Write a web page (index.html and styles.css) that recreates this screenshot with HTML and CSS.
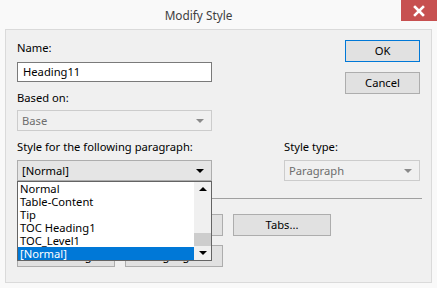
FILE: index.html
```html
<!DOCTYPE html>
<html lang="en">
<head>
    <meta charset="utf-8" />
    <title>Modify Style</title>
    <link rel="stylesheet" href="styles.css">
</head>
<body>
    <div class="window">
        <div class="titlebar">
            <div class="title">Modify Style</div>
            <div class="close">
                <svg width="12" height="12" viewBox="0 0 12 12">
                    <path d="M2 2 L10 10 M10 2 L2 10" stroke="#fff" stroke-width="2.6" stroke-linecap="square" />
                </svg>
            </div>
        </div>

        <div class="panel">
            <div class="top-row">
                <div class="left-col">
                    <div class="label">Name:</div>
                    <div class="textbox">Heading11</div>
                    <div class="label based">Based on:</div>
                    <div class="select disabled">
                        <span>Base</span>
                        <span class="arrow"></span>
                    </div>
                </div>
                <div class="right-col">
                    <div class="btn default">OK</div>
                    <div class="btn">Cancel</div>
                </div>
            </div>

            <div class="mid-row">
                <div class="left-col">
                    <div class="label">Style for the following paragraph:</div>
                    <div class="select-wrap">
                        <div class="select open">
                            <span>[Normal]</span>
                            <span class="arrow"></span>
                        </div>
                        <div class="droplist">
                            <div class="items">
                                <div class="item">Normal</div>
                                <div class="item">Table-Content</div>
                                <div class="item">Tip</div>
                                <div class="item">TOC Heading1</div>
                                <div class="item">TOC_Level1</div>
                                <div class="item selected">[Normal]</div>
                            </div>
                            <div class="scrollbar">
                                <div class="sb-up"></div>
                                <div class="sb-track">
                                    <div class="sb-thumb"></div>
                                </div>
                                <div class="sb-down"></div>
                            </div>
                        </div>
                    </div>
                </div>
                <div class="type-col">
                    <div class="label">Style type:</div>
                    <div class="select disabled">
                        <span>Paragraph</span>
                        <span class="arrow"></span>
                    </div>
                </div>
            </div>

            <div class="separator"></div>

            <!-- first row sits under the open list, so its captions are never seen -->
            <div class="button-grid">
                <div class="btn wide"></div>
                <div class="btn wide"></div>
                <div class="btn wide">Tabs...</div>
                <div class="btn wide">Numbering...</div>
                <div class="btn wide">Language...</div>
            </div>
        </div>
    </div>
</body>
</html>
```

FILE: styles.css
```css
html, body {
  margin: 0;
  padding: 0;
}

body {
  background-color: #f9f9f9;
  font-family: "Noto Sans", "Open Sans", sans-serif;
  font-size: 11.2px;
  color: #000;
}

.window {
  width: 437px;
  height: 288px;
  overflow: hidden;
}

.titlebar {
  display: flex;
  height: 29px;
}

.title {
  flex: 1;
  text-align: center;
  font-size: 11.8px;
  line-height: 30px;
  color: #404040;
  padding-right: 4px;
}

.close {
  width: 36px;
  height: 21px;
  background-color: #c75050;
  display: flex;
  align-items: center;
  justify-content: center;
}

.panel {
  margin: 0 5px;
  height: 254px;
  box-sizing: border-box;
  border: 1px solid #dadada;
  background-color: #f0f0f0;
  padding: 10px 11px 0 11px;
}

.top-row {
  display: flex;
  justify-content: space-between;
}

.left-col {
  width: 195px;
}

.right-col {
  display: flex;
  flex-direction: column;
  gap: 10px;
}

.label {
  line-height: 15px;
  height: 15px;
  white-space: nowrap;
}

.label.based {
  margin-top: 8px;
}

.textbox {
  margin-top: 7px;
  height: 20px;
  box-sizing: border-box;
  border: 1px solid #7a7a7a;
  background-color: #fff;
  padding-left: 5px;
  line-height: 18px;
}

.select {
  margin-top: 5px;
  height: 21px;
  box-sizing: border-box;
  border: 1px solid #adadad;
  background-color: #e5e5e5;
  display: flex;
  justify-content: space-between;
  align-items: center;
  padding: 0 7px 0 4px;
}

.select.disabled {
  background-color: #f0f0f0;
  border-color: #cccccc;
  color: #6d6d6d;
}

.select .arrow {
  width: 0;
  height: 0;
  border-left: 4px solid transparent;
  border-right: 4px solid transparent;
  border-top: 4px solid #000;
}

.select.disabled .arrow {
  border-top-color: #8a8a8a;
}

.btn {
  width: 75px;
  height: 22px;
  box-sizing: border-box;
  border: 1px solid #adadad;
  background-color: #e1e1e1;
  text-align: center;
  line-height: 20px;
}

.btn.default {
  border-color: #0078d7;
}

.btn.wide {
  width: 98px;
}

.mid-row {
  display: flex;
  justify-content: space-between;
  margin-top: 8px;
}

.mid-row .select {
  margin-top: 6px;
}

.type-col {
  width: 136px;
}

.select-wrap {
  position: relative;
}

.droplist {
  position: absolute;
  left: 0;
  top: 21px;
  width: 195px;
  height: 80px;
  box-sizing: border-box;
  border: 1px solid #646464;
  background-color: #fff;
  display: flex;
  z-index: 2;
}

.items {
  flex: 1;
}

.item {
  height: 13px;
  line-height: 13px;
  padding-left: 2px;
  white-space: nowrap;
}

.item.selected {
  background-color: #0078d7;
  color: #fff;
}

.scrollbar {
  width: 17px;
  background-color: #f0f0f0;
  display: flex;
  flex-direction: column;
}

.sb-up, .sb-down {
  height: 14px;
  display: flex;
  align-items: center;
  justify-content: center;
}

.sb-up::after {
  content: "";
  border-left: 4px solid transparent;
  border-right: 4px solid transparent;
  border-bottom: 4px solid #000;
}

.sb-down::after {
  content: "";
  border-left: 4px solid transparent;
  border-right: 4px solid transparent;
  border-top: 4px solid #000;
}

.sb-track {
  flex: 1;
  display: flex;
  flex-direction: column;
  justify-content: flex-end;
}

.sb-thumb {
  height: 13px;
  background-color: #cdcdcd;
}

.separator {
  margin-top: 17px;
  border-top: 1px solid #a0a0a0;
  width: 405px;
}

.button-grid {
  margin-top: 15px;
  display: grid;
  grid-template-columns: 98px 98px 98px;
  column-gap: 10px;
  row-gap: 9px;
}
```
